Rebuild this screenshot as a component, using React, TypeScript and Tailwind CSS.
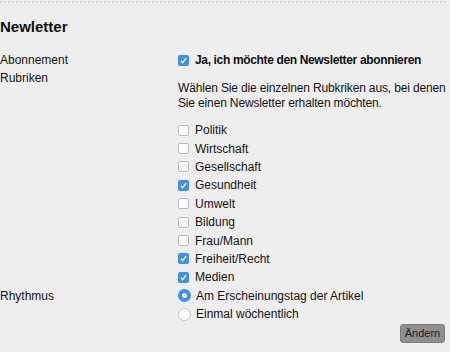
import React from "react";

const font = { fontFamily: '"Liberation Sans", Arial, sans-serif' };

function Box({ checked }: { checked?: boolean }) {
  return checked ? (
    <span className="inline-flex h-[11px] w-[11px] shrink-0 items-center justify-center rounded-[2px] bg-[#3d8ff0]">
      <svg viewBox="0 0 10 10" className="h-[9px] w-[9px]" fill="none" stroke="white" strokeWidth="1.6">
        <path d="M2.2 5.2l1.9 2.1 3.8-5" />
      </svg>
    </span>
  ) : (
    <span className="inline-block h-[11px] w-[11px] shrink-0 rounded-[2px] border border-[#b9b9b9] bg-white" />
  );
}

function Radio({ checked }: { checked?: boolean }) {
  return checked ? (
    <span className="inline-flex h-[13px] w-[13px] shrink-0 items-center justify-center rounded-full bg-[#3d8ff0]">
      <span className="h-[5px] w-[5px] rounded-full bg-white" />
    </span>
  ) : (
    <span className="inline-block h-[13px] w-[13px] shrink-0 rounded-full border border-[#c2c2c2] bg-white" />
  );
}

const rubriken: [string, boolean][] = [
  ["Politik", false],
  ["Wirtschaft", false],
  ["Gesellschaft", false],
  ["Gesundheit", true],
  ["Umwelt", false],
  ["Bildung", false],
  ["Frau/Mann", false],
  ["Freiheit/Recht", true],
  ["Medien", true],
];

export default function App() {
  return (
    <div className="h-[352px] w-[450px] overflow-hidden whitespace-nowrap bg-[#eeeeee] text-[12px] text-[#141414]" style={font}>
      <div className="mr-[4px] mt-[1px] border-t-2 border-dotted border-[#d4d4d4]" />
      <h2 className="mt-[15px] text-[15px] font-bold leading-[18px] text-[#111]">Newletter</h2>

      <div className="mt-[15px] grid grid-cols-[178px_1fr]">
        {/* Abonnement */}
        <div className="leading-[18px]">Abonnement</div>
        <label className="flex items-center gap-[6px] leading-[18px]">
          <Box checked />
          <span className="font-bold tracking-[-0.35px] text-[#111]">Ja, ich möchte den Newsletter abonnieren</span>
        </label>

        {/* Rubriken */}
        <div className="leading-[18px]">Rubriken</div>
        <div className="pt-[12px]">
          <p className="leading-[15px] tracking-[-0.15px]">
            Wählen Sie die einzelnen Rubkriken aus, bei denen
            <br />
            Sie einen Newsletter erhalten möchten.
          </p>
          <ul className="mt-[10px]">
            {rubriken.map(([name, on]) => (
              <li key={name} className="flex h-[18.4px] items-center gap-[6px]">
                <Box checked={on} />
                <span>{name}</span>
              </li>
            ))}
          </ul>
        </div>

        {/* Rhythmus */}
        <div className="leading-[18px]">Rhythmus</div>
        <div>
          <div className="flex h-[18.4px] items-center gap-[5px]">
            <Radio checked />
            <span>Am Erscheinungstag der Artikel</span>
          </div>
          <div className="flex h-[18.4px] items-center gap-[5px]">
            <Radio />
            <span>Einmal wöchentlich</span>
          </div>
        </div>
      </div>

      <div className="mr-[5px] mt-[1px] flex justify-end">
        <button className="h-[19px] w-[45px] rounded-[3px] border border-[#7e7e7e] bg-[#8f8f8f] text-[11px] leading-[13px] text-[#222]">
          Ändern
        </button>
      </div>
    </div>
  );
}
